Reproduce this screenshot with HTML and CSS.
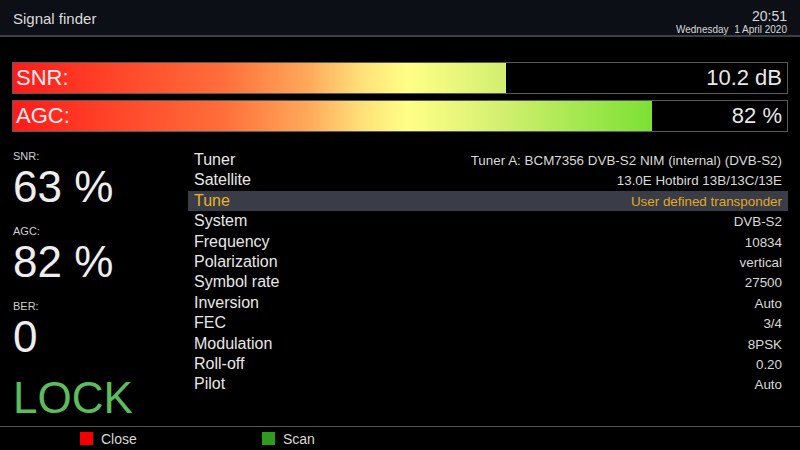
FILE: index.html
```html
<!DOCTYPE html>
<html lang="en">
<head>
<meta charset="UTF-8">
<meta name="viewport" content="width=device-width, initial-scale=1.0">
<title>Signal finder</title>
<link rel="stylesheet" href="styles.css">
</head>
<body>
<div class="screen">
  <div class="header">
    <div class="title">Signal finder</div>
    <div class="clock">
      <div class="time">20:51</div>
      <div class="date">Wednesday&nbsp; 1 April 2020</div>
    </div>
  </div>

  <div class="main">
    <div class="bar">
      <div class="fill" style="width: 63.7%"></div>
      <div class="rest"></div>
      <span class="bar-label">SNR:</span>
      <span class="bar-value">10.2 dB</span>
    </div>
    <div class="bar">
      <div class="fill" style="width: 82.6%"></div>
      <div class="rest"></div>
      <span class="bar-label">AGC:</span>
      <span class="bar-value">82 %</span>
    </div>

    <div class="content">
      <div class="stats">
        <div class="stat">
          <div class="stat-label">SNR:</div>
          <div class="stat-value">63 %</div>
        </div>
        <div class="stat">
          <div class="stat-label">AGC:</div>
          <div class="stat-value">82 %</div>
        </div>
        <div class="stat">
          <div class="stat-label">BER:</div>
          <div class="stat-value">0</div>
        </div>
        <div class="lock">LOCK</div>
      </div>

      <div class="list">
        <div class="row"><span class="key">Tuner</span><span class="val">Tuner A: BCM7356 DVB-S2 NIM (internal) (DVB-S2)</span></div>
        <div class="row"><span class="key">Satellite</span><span class="val">13.0E Hotbird 13B/13C/13E</span></div>
        <div class="row selected"><span class="key">Tune</span><span class="val">User defined transponder</span></div>
        <div class="row"><span class="key">System</span><span class="val">DVB-S2</span></div>
        <div class="row"><span class="key">Frequency</span><span class="val">10834</span></div>
        <div class="row"><span class="key">Polarization</span><span class="val">vertical</span></div>
        <div class="row"><span class="key">Symbol rate</span><span class="val">27500</span></div>
        <div class="row"><span class="key">Inversion</span><span class="val">Auto</span></div>
        <div class="row"><span class="key">FEC</span><span class="val">3/4</span></div>
        <div class="row"><span class="key">Modulation</span><span class="val">8PSK</span></div>
        <div class="row"><span class="key">Roll-off</span><span class="val">0.20</span></div>
        <div class="row"><span class="key">Pilot</span><span class="val">Auto</span></div>
      </div>
    </div>
  </div>

  <div class="footer">
    <div class="button"><span class="key-red"></span>Close</div>
    <div class="button"><span class="key-green"></span>Scan</div>
  </div>
</div>
</body>
</html>
```
FILE: styles.css
```css
html, body {
    margin: 0;
    padding: 0;
    background-color: #000;
}

body {
    font-family: "Liberation Sans", Arial, sans-serif;
    color: #e8e8e8;
}

.screen {
    width: 800px;
    height: 450px;
    display: flex;
    flex-direction: column;
    overflow: hidden;
}

.header {
    height: 35px;
    background-color: #0d0f17;
    border-bottom: 2px solid #3e3e44;
    display: flex;
    justify-content: space-between;
    padding: 0 13px;
}

.title {
    font-size: 15px;
    line-height: 15px;
    padding-top: 11px;
    color: #dcdcdc;
}

.clock {
    text-align: right;
    color: #d8d8d8;
    padding-top: 9px;
}

.time {
    font-size: 14px;
    line-height: 15px;
}

.date {
    font-size: 10px;
    line-height: 11px;
}

.main {
    flex: 1;
    padding: 25px 12px 0 12px;
}

.bar {
    position: relative;
    height: 30px;
    border: 1px solid #5a5a5a;
    display: flex;
    margin-bottom: 6px;
    background: linear-gradient(to right, #ff1a1a 0%, #ff4228 12%, #ff6e3a 27%, #ffa85a 38%, #ffe078 45%, #ffff86 51%, #d4f070 63%, #a4e850 73%, #7ae032 83%, #5ad424 100%);
}

.fill {
    height: 100%;
}

.rest {
    flex: 1;
    background-color: #000;
}

.bar-label {
    position: absolute;
    left: 3px;
    top: 0;
    font-size: 22px;
    line-height: 30px;
    color: #eee;
}

.bar-value {
    position: absolute;
    right: 5px;
    top: 0;
    font-size: 22px;
    line-height: 30px;
    color: #e8e8e8;
}

.content {
    display: flex;
    margin-top: 17px;
}

.stats {
    width: 175px;
    padding-left: 1px;
}

.stat {
    margin-bottom: 13px;
}

.stat-label {
    font-size: 11px;
    line-height: 14px;
    color: #d0d0d0;
}

.stat-value {
    font-size: 44px;
    line-height: 48px;
    color: #eee;
}

.lock {
    font-size: 44px;
    line-height: 48px;
    margin-top: 3px;
    color: #5cbd5c;
}

.list {
    flex: 1;
    padding-top: 1px;
}

.row {
    display: flex;
    justify-content: space-between;
    align-items: baseline;
    height: 20.4px;
    line-height: 20.4px;
    padding: 0 6px;
}

.key {
    font-size: 16px;
    color: #e8e8e8;
}

.val {
    font-size: 13.4px;
    color: #dadada;
}

.selected {
    background-color: #3a3c48;
}

.selected .key {
    color: #e8b526;
}

.selected .val {
    color: #e0aa22;
}

.footer {
    height: 23px;
    border-top: 1px solid #555;
    display: flex;
    padding-left: 80px;
    font-size: 14px;
    color: #d8d8d8;
}

.button {
    width: 182px;
    display: flex;
    align-items: center;
}

.key-red,
.key-green {
    width: 13px;
    height: 13px;
    margin-right: 8px;
}

.key-red {
    background-color: #f00000;
}

.key-green {
    background-color: #2e9a1e;
}
```
